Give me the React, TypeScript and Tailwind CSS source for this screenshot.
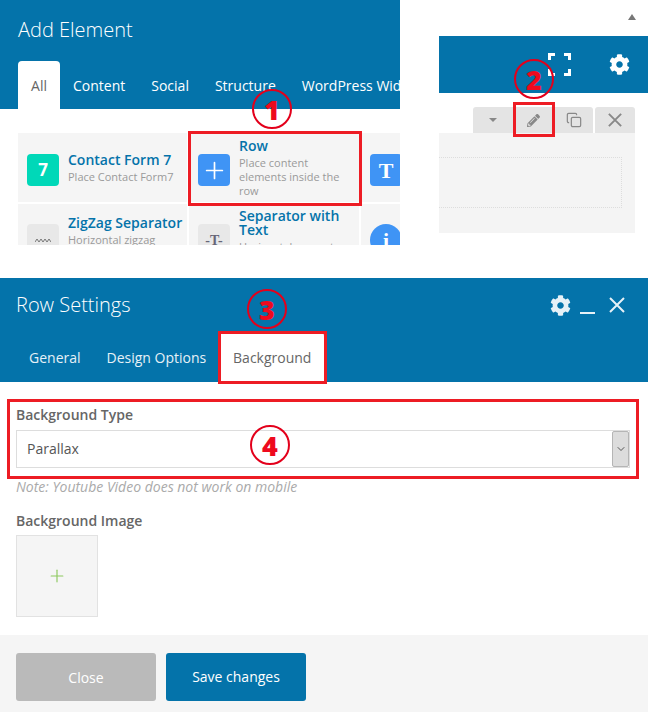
import React from "react";
import { Plus, Copy, ChevronDown } from "lucide-react";
import { FaCog, FaPencilAlt } from "react-icons/fa";

const font = { fontFamily: '"Open Sans", sans-serif' };
const serif = { fontFamily: '"Liberation Serif", serif' };

function Marker({ n, className }: { n: number; className: string }) {
  return (
    <div
      className={`absolute w-[40px] h-[40px] rounded-full border-2 border-[#e3001b] flex items-center justify-center text-[27px] font-extrabold text-[#ee0a1e] leading-none ${className}`}
    >
      {n}
    </div>
  );
}

function Cross({ size, width }: { size: number; width: number }) {
  return (
    <svg width={size} height={size} viewBox="0 0 16 16" fill="none" stroke="currentColor" strokeWidth={width}>
      <path d="M1 1l14 14M15 1L1 15" />
    </svg>
  );
}

function ElementCard({
  icon,
  title,
  desc,
  className,
}: {
  icon: React.ReactNode;
  title: string;
  desc: string;
  className: string;
}) {
  return (
    <div className={`bg-[#f5f5f5] flex pl-[9px] gap-[9px] ${className}`}>
      {icon}
      <div className="min-w-0 flex-1">
        <div className="text-[14px] leading-[14px] font-semibold text-[#0473aa]">{title}</div>
        <div className="text-[11px] leading-[14px] text-[#9a9a9a] mt-[3px]">{desc}</div>
      </div>
    </div>
  );
}

function IconBox({ className, children }: { className: string; children: React.ReactNode }) {
  return (
    <div className={`w-[32px] h-[32px] shrink-0 rounded-[4px] flex items-center justify-center ${className}`}>
      {children}
    </div>
  );
}

function AddElement() {
  return (
    <div className="w-[400px] h-[245px] overflow-hidden shrink-0">
      <div className="h-[109px] bg-[#0473aa] flex flex-col">
        <div className="pl-[18px] pt-[16px] h-[61px] text-[20px] leading-[28px] text-white font-light">Add Element</div>
        <div className="flex pl-[18px] text-[14px] text-white whitespace-nowrap overflow-hidden">
          <div className="w-[42px] shrink-0 h-[48px] bg-white rounded-t-[4px] text-[#666] flex items-center justify-center">All</div>
          <div className="h-[48px] shrink-0 flex items-center ml-[13px]">Content</div>
          <div className="h-[48px] shrink-0 flex items-center ml-[26px]">Social</div>
          <div className="h-[48px] shrink-0 flex items-center ml-[26px]">Structure</div>
          <div className="h-[48px] shrink-0 flex items-center ml-[26px]">WordPress Widgets</div>
        </div>
      </div>
      <div className="pl-[18px] pt-[24px] w-[480px] grid grid-cols-[169px_170px_100px] grid-rows-[69px_69px] gap-x-[2px] gap-y-[2px]">
        <ElementCard
          className="items-center pt-[2px]"
          icon={
            <IconBox className="bg-[#00d8b8] text-white text-[17px] font-bold mt-[3px]">7</IconBox>
          }
          title="Contact Form 7"
          desc="Place Contact Form7"
        />
        <ElementCard
          className="items-center pt-[2px] pr-[14px]"
          icon={
            <IconBox className="bg-[#3f94f5] text-white mt-[3px]">
              <Plus size={27} strokeWidth={1.5} />
            </IconBox>
          }
          title="Row"
          desc="Place content elements inside the row"
        />
        <ElementCard
          className="items-center pt-[2px]"
          icon={
            <IconBox className="bg-[#3f94f5] text-white text-[22px] font-bold mt-[3px]">
              <span style={serif}>T</span>
            </IconBox>
          }
          title=""
          desc=""
        />
        <ElementCard
          className="items-start pt-[12px]"
          icon={
            <IconBox className="bg-[#e8e8e8] text-[#777] mt-[8px]">
              <svg width="16" height="6" viewBox="0 0 16 6" fill="none" stroke="currentColor" strokeWidth="1">
                <path d="M0 5l2-3 2 3 2-3 2 3 2-3 2 3 2-3 2 3" />
              </svg>
            </IconBox>
          }
          title="ZigZag Separator"
          desc="Horizontal zigzag separator"
        />
        <ElementCard
          className="items-start pt-[5px]"
          icon={
            <IconBox className="bg-[#e8e8e8] text-[#667] text-[14px] font-bold mt-[15px]">
              <span style={serif}>-T-</span>
            </IconBox>
          }
          title="Separator with Text"
          desc="Horizontal separator"
        />
        <ElementCard
          className="items-start pt-[5px]"
          icon={
            <IconBox className="bg-[#3f94f5] text-white text-[22px] font-bold !rounded-full mt-[15px]">
              <span style={serif}>i</span>
            </IconBox>
          }
          title=""
          desc=""
        />
      </div>
    </div>
  );
}

function FocusIcon() {
  return (
    <svg width="23" height="23" viewBox="0 0 23 23" fill="none" stroke="white" strokeWidth="3">
      <path d="M1.5 7V1.5H7M16 1.5h5.5V7M21.5 16v5.5H16M7 21.5H1.5V16" />
    </svg>
  );
}

function RowToolbar() {
  return (
    <div className="w-[209px] ml-[39px] shrink-0">
      <div className="h-[36px] flex justify-end pr-[12px] pt-[14px]">
        <div className="w-0 h-0 border-x-[4px] border-x-transparent border-b-[6px] border-b-[#777]" />
      </div>
      <div className="h-[57px] bg-[#0473aa] flex items-center text-white pl-[109px]">
        <FocusIcon />
        <FaCog size={21} className="ml-[38px]" />
      </div>
      <div className="w-[196px] mt-[14px]">
        <div className="h-[26px] flex justify-end gap-[2px] text-[#888]">
          <div className="w-[120px] bg-[#e4e4e4] rounded-t-[3px] flex items-center">
            <div className="w-[40px] flex justify-center">
              <div className="w-0 h-0 border-x-[4px] border-x-transparent border-t-[4px] border-t-[#888]" />
            </div>
            <div className="w-[41px] flex justify-center">
              <FaPencilAlt size={13} />
            </div>
            <div className="w-[39px] flex justify-center">
              <Copy size={16} strokeWidth={1.8} />
            </div>
          </div>
          <div className="w-[40px] bg-[#e4e4e4] rounded-t-[3px] flex items-center justify-center">
            <Cross size={14} width={2.2} />
          </div>
        </div>
        <div className="h-[100px] bg-[#f4f4f4] pt-[24px] pr-[13px]">
          <div className="h-[51px] border border-dotted border-[#ddd] border-l-0" />
        </div>
      </div>
    </div>
  );
}

function RowSettings() {
  return (
    <div className="mt-[33px]">
      <div className="h-[104px] bg-[#0473aa]">
        <div className="flex items-center justify-between pl-[16px] pr-[23px] h-[54px] text-white">
          <div className="text-[20px] leading-[28px] font-light">Row Settings</div>
          <div className="flex items-center text-[#e6f1f7]">
            <FaCog size={21} />
            <div className="w-[15px] h-[2px] bg-current ml-[9px] mt-[16px]" />
            <div className="ml-[14px]">
              <Cross size={16} width={2} />
            </div>
          </div>
        </div>
        <div className="flex pl-[13px] text-[14px] text-[#e6f1f7] whitespace-nowrap">
          <div className="h-[50px] px-[16px] flex items-center">General</div>
          <div className="h-[50px] pl-[10px] pr-[14px] flex items-center">Design Options</div>
          <div className="h-[50px] w-[104px] bg-white rounded-t-[4px] text-[#666] flex items-center justify-center">Background</div>
        </div>
      </div>
      <div className="px-[16px]">
        <div className="pt-[24px] text-[14px] leading-[18px] font-semibold text-[#666]">Background Type</div>
        <div className="mt-[6px] h-[38px] w-[614px] border border-[#ddd] flex items-center justify-between pl-[10px] text-[14px] text-[#555]">
          <span className="pb-[2px]">Parallax</span>
          <div className="w-[17px] h-[36px] bg-[#dcdcdc] border border-[#b5b5b5] rounded-[2px] flex items-center justify-center text-[#333]">
            <ChevronDown size={12} strokeWidth={1.6} />
          </div>
        </div>
        <div className="mt-[10px] text-[14px] leading-[18px] italic text-[#aaa]">Note: Youtube Video does not work on mobile</div>
        <div className="mt-[16px] text-[14px] leading-[18px] font-semibold text-[#666]">Background Image</div>
        <div className="mt-[5px] w-[82px] h-[82px] bg-[#f5f5f5] border border-[#e2e2e2] flex items-center justify-center text-[#8dc95f]">
          <Plus size={20} strokeWidth={1.4} />
        </div>
      </div>
      <div className="mt-[18px] h-[77px] bg-[#f5f5f5] flex items-start gap-[10px] pl-[16px] pt-[18px] text-[14px] text-white">
        <div className="w-[140px] h-[48px] bg-[#bababa] rounded-[3px] flex items-center justify-center">Close</div>
        <div className="w-[140px] h-[48px] bg-[#0473aa] rounded-[3px] flex items-center justify-center pb-[2px]">Save changes</div>
      </div>
    </div>
  );
}

export default function App() {
  return (
    <div className="relative w-[648px] h-[712px] bg-white overflow-hidden" style={font}>
      <div className="flex h-[245px]">
        <AddElement />
        <RowToolbar />
      </div>
      <RowSettings />

      {/* callouts */}
      <div className="absolute left-[188px] top-[131px] w-[174px] h-[75px] border-[3px] border-[#ed1c24]" />
      <div className="absolute left-[513px] top-[102px] w-[42px] h-[35px] border-[3px] border-[#ed1c24]" />
      <div className="absolute left-[218px] top-[331px] w-[109px] h-[53px] border-[3px] border-[#ed1c24]" />
      <div className="absolute left-[7px] top-[399px] w-[632px] h-[80px] border-[3px] border-[#ed1c24]" />
      <Marker n={1} className="left-[252px] top-[89px]" />
      <Marker n={2} className="left-[514px] top-[59px]" />
      <Marker n={3} className="left-[247px] top-[289px]" />
      <Marker n={4} className="left-[250px] top-[425px]" />
    </div>
  );
}
